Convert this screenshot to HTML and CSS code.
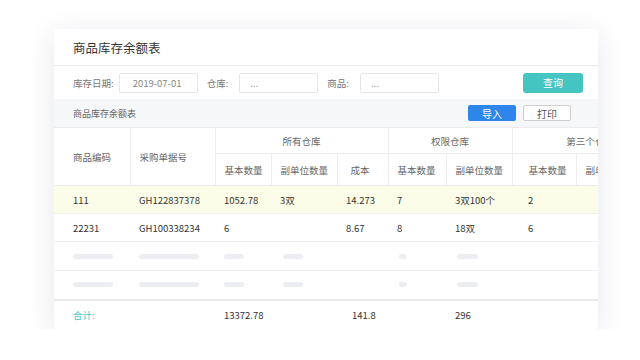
FILE: index.html
```html
<!DOCTYPE html>
<html lang="zh-CN">
<head>
    <meta charset="UTF-8">
    <meta name="viewport" content="width=device-width, initial-scale=1.0">
    <title>商品库存余额表</title>
    <link rel="stylesheet" href="styles.css">
</head>
<body>
    <div class="card">
        <div class="card-title">商品库存余额表</div>

        <div class="filters">
            <label>库存日期:</label>
            <div class="input date">2019-07-01</div>
            <label class="wide">仓库:</label>
            <div class="input">...</div>
            <label class="wide">商品:</label>
            <div class="input">...</div>
            <button class="btn-query">查询</button>
        </div>

        <div class="toolbar">
            <span>商品库存余额表</span>
            <div class="toolbar-buttons">
                <button class="btn-import">导入</button>
                <button class="btn-print">打印</button>
            </div>
        </div>

        <table class="stock-table">
            <colgroup>
                <col style="width:76px">
                <col style="width:85px">
                <col style="width:56px">
                <col style="width:66px">
                <col style="width:51px">
                <col style="width:58px">
                <col style="width:66px">
                <col style="width:64px">
                <col style="width:66px">
                <col style="width:26px">
            </colgroup>
            <thead>
                <tr class="group-row">
                    <th rowspan="2" class="first">商品编码</th>
                    <th rowspan="2">采购单据号</th>
                    <th colspan="3" class="group">所有仓库</th>
                    <th colspan="2" class="group">权限仓库</th>
                    <th colspan="3" class="group">第三个仓库</th>
                </tr>
                <tr class="sub-row">
                    <th>基本数量</th>
                    <th>副单位数量</th>
                    <th class="cost">成本</th>
                    <th>基本数量</th>
                    <th>副单位数量</th>
                    <th class="third">基本数量</th>
                    <th>副单位数量</th>
                    <th>成本</th>
                </tr>
            </thead>
            <tbody id="rows"></tbody>
            <tfoot>
                <tr>
                    <td class="first total">合计:</td>
                    <td></td>
                    <td>13372.78</td>
                    <td></td>
                    <td class="cost-sum">141.8</td>
                    <td></td>
                    <td>296</td>
                    <td></td>
                    <td></td>
                    <td></td>
                </tr>
            </tfoot>
        </table>
    </div>

    <script>
        const rows = [
            ['111', 'GH122837378', '1052.78', '3双', '14.273', '7', '3双100个', '2', '', ''],
            ['22231', 'GH100338234', '6', '', '8.67', '8', '18双', '6', '', '']
        ];
        // widths of the loading bars, 0 means empty cell
        const skeleton = [40, 60, 20, 20, 0, 8, 21, 0, 0, 0];

        const tbody = document.getElementById('rows');
        rows.forEach((row, i) => {
            const tr = document.createElement('tr');
            if (i === 0) tr.className = 'active';
            tr.innerHTML = row.map((v, j) =>
                `<td class="${j === 0 ? 'first' : ''}${j === 7 ? 'third' : ''}">${v}</td>`).join('');
            tbody.appendChild(tr);
        });
        for (let k = 0; k < 2; k++) {
            const tr = document.createElement('tr');
            tr.className = 'loading';
            tr.innerHTML = skeleton.map((w, j) =>
                `<td class="${j === 0 ? 'first' : ''}">${w ? `<span class="bar" style="width:${w}px"></span>` : ''}</td>`).join('');
            tbody.appendChild(tr);
        }
    </script>
</body>
</html>
```

FILE: styles.css
```css
* {
    margin: 0;
    padding: 0;
    box-sizing: border-box;
    font-family: "Noto Sans CJK SC", "Noto Sans", sans-serif;
}

body {
    background: #fff;
    padding: 29px 0 0 54px;
}

.card {
    width: 544px;
    height: 300px;
    background: #fff;
    border-radius: 3px;
    overflow: hidden;
    box-shadow: 0 6px 30px rgba(30, 40, 80, 0.11);
}

.card-title {
    height: 37px;
    padding: 0 19px;
    display: flex;
    align-items: center;
    font-size: 12.5px;
    color: #333;
    border-bottom: 1px solid #e9e9e9;
}

.filters {
    height: 33px;
    display: flex;
    align-items: center;
    padding: 0 15px 0 19px;
    font-size: 9.5px;
    color: #777;
}

.filters label {
    margin-right: 5px;
}

.filters label.wide {
    margin-right: 11px;
}

.input {
    width: 79px;
    height: 20px;
    border: 1px solid #e6e6e6;
    border-radius: 2px;
    margin-right: 9px;
    padding-left: 10px;
    display: flex;
    align-items: center;
    color: #888;
    font-size: 9.5px;
}

.input.date {
    padding-left: 13px;
}

.btn-query {
    margin-left: auto;
    width: 60px;
    height: 20px;
    border: none;
    border-radius: 3px;
    background: #44c5c1;
    color: #fff;
    font-size: 10px;
}

.toolbar {
    height: 28px;
    background: #f6f7f9;
    display: flex;
    align-items: center;
    padding: 0 27px 0 19px;
    font-size: 9px;
    color: #666;
}

.toolbar-buttons {
    margin-left: auto;
    display: flex;
    gap: 7px;
}

.toolbar-buttons button {
    width: 48px;
    height: 16px;
    border-radius: 2px;
    font-size: 10px;
}

.btn-import {
    background: #2e86eb;
    border: none;
    color: #fff;
}

.btn-print {
    background: #fff;
    border: 1px solid #cfcfcf;
    color: #555;
}

.stock-table {
    table-layout: fixed;
    width: 614px;
    border-collapse: collapse;
    font-size: 9.5px;
    color: #333;
}

.stock-table th {
    font-weight: normal;
    color: #666;
    text-align: left;
    padding: 0 0 0 9px;
    border: 1px solid #ececec;
    white-space: nowrap;
    overflow: hidden;
}

.group-row {
    height: 26px;
}

.sub-row {
    height: 32px;
}

.stock-table th.group {
    text-align: center;
    padding: 0;
}

.stock-table th.first,
.stock-table td.first {
    padding-left: 19px;
    border-left: none;
}

.stock-table th.cost {
    padding-left: 13px;
}

.stock-table th.third,
.stock-table td.third {
    padding-left: 16px;
}

.stock-table td {
    padding: 0 0 0 9px;
    white-space: nowrap;
    overflow: hidden;
}

.stock-table tbody tr {
    height: 28px;
    border-bottom: 1px solid #f0f0f0;
}

.stock-table tbody tr.loading {
    height: 29px;
}

.stock-table tbody tr.active {
    background: #fcfde9;
}

.bar {
    display: block;
    height: 5px;
    border-radius: 3px;
    background: #eceef2;
}

.stock-table tbody tr.loading td:nth-child(4) {
    padding-left: 12px;
}

.stock-table tbody tr.loading td:nth-child(6) {
    padding-left: 11px;
}

.stock-table tbody tr.loading td:nth-child(7) {
    padding-left: 11px;
}

.stock-table tfoot tr {
    height: 29px;
    border-top: 2px solid #eaeaea;
}

.total {
    color: #4cc6c4;
}

.stock-table td.cost-sum {
    padding-left: 15px;
}
```
